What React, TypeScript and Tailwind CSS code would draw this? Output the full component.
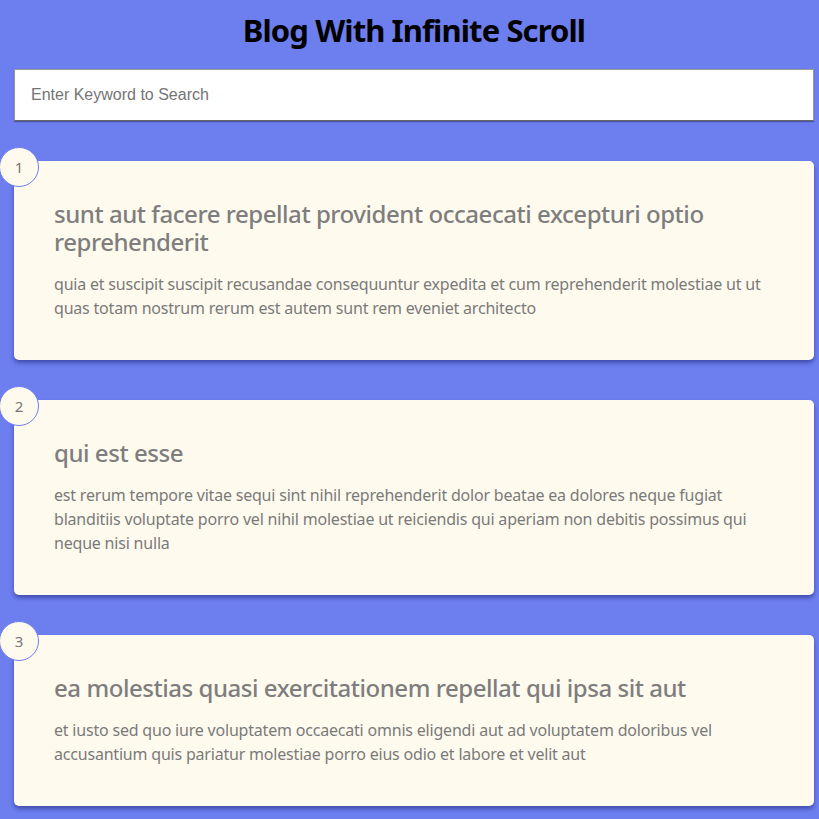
import React, { useState } from 'react';

interface Post {
  id: number;
  title: string;
  body: string;
}

const posts: Post[] = [
  {
    id: 1,
    title: 'sunt aut facere repellat provident occaecati excepturi optio reprehenderit',
    body: 'quia et suscipit suscipit recusandae consequuntur expedita et cum reprehenderit molestiae ut ut quas totam nostrum rerum est autem sunt rem eveniet architecto',
  },
  {
    id: 2,
    title: 'qui est esse',
    body: 'est rerum tempore vitae sequi sint nihil reprehenderit dolor beatae ea dolores neque fugiat blanditiis voluptate porro vel nihil molestiae ut reiciendis qui aperiam non debitis possimus qui neque nisi nulla',
  },
  {
    id: 3,
    title: 'ea molestias quasi exercitationem repellat qui ipsa sit aut',
    body: 'et iusto sed quo iure voluptatem occaecati omnis eligendi aut ad voluptatem doloribus vel accusantium quis pariatur molestiae porro eius odio et labore et velit aut',
  },
];

function PostCard({ post }: { post: Post }) {
  return (
    <div className="relative bg-[#fffaee] rounded-[5px] shadow-[0_3px_4px_rgba(30,40,120,0.55)] px-10 pt-[39px] pb-[40px]">
      {/* numéro du post */}
      <div className="absolute -left-[15px] -top-[14px] w-[40px] h-[40px] rounded-full bg-[#fffaee] border border-[#6d7eef] flex items-center justify-center text-[15px] text-[#777]">
        {post.id}
      </div>
      <h2 className="text-[24px] leading-7 font-medium tracking-[-0.45px] text-[#7e7e7e]">{post.title}</h2>
      <p className="mt-4 text-[16px] leading-6 tracking-[-0.2px] text-[#7a7a7a]">{post.body}</p>
    </div>
  );
}

export default function App() {
  const [keyword, setKeyword] = useState('');

  const filtered = posts.filter(
    (p) => p.title.includes(keyword) || p.body.includes(keyword)
  );

  return (
    <div className="min-h-screen bg-[#6d7eef] pl-[14px] pr-[5px] pb-10 font-['Noto_Sans',sans-serif]">
      <h1 className="pt-[12px] text-center text-[31px] leading-[36px] font-bold tracking-[-0.9px] text-black">
        Blog With Infinite Scroll
      </h1>
      <input
        value={keyword}
        onChange={(e) => setKeyword(e.target.value)}
        placeholder="Enter Keyword to Search"
        className="mt-[21px] block w-full h-[52px] bg-white border border-[#999] border-b-[#666] shadow-[0_1px_1px_rgba(0,0,0,0.3)] px-4 text-[16px] font-['Liberation_Sans',sans-serif] placeholder:text-[#757575] outline-none"
      />
      <div className="mt-10 flex flex-col gap-10">
        {filtered.map((post) => (
          <PostCard key={post.id} post={post} />
        ))}
      </div>
    </div>
  );
}
